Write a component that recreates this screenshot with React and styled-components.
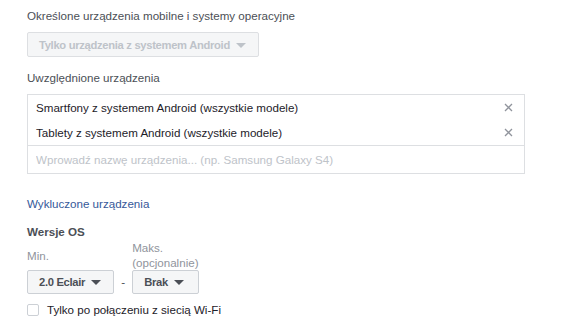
import React from 'react';
import styled, { createGlobalStyle } from 'styled-components';

const GlobalStyle = createGlobalStyle`
  body {
    margin: 0;
    background: #fff;
    font-family: "Liberation Sans", Arial, sans-serif;
    font-size: 11.6px;
    color: #1d2129;
  }
`;

const Page = styled.div`
  padding: 8px 0 0 27px;
  width: 497px;
`;

const Label = styled.div`
  line-height: 16px;
  color: #4b4f56;
  margin: ${p => p.$top || 0}px 0 8px;
`;

const Select = styled.button`
  display: inline-flex;
  align-items: center;
  gap: 6px;
  box-sizing: border-box;
  height: ${p => p.$h || 24}px;
  padding: 0 12px 0 11px;
  border: 1px solid ${p => (p.$disabled ? '#dddfe2' : '#ccd0d5')};
  border-radius: 2px;
  background: #f5f6f7;
  color: ${p => (p.$disabled ? '#bec3c9' : '#4b4f56')};
  font-family: inherit;
  font-size: 11.2px;
  font-weight: bold;
  letter-spacing: -0.3px;
  white-space: nowrap;
  cursor: ${p => (p.$disabled ? 'default' : 'pointer')};
`;

const Arrow = styled.span`
  width: 0;
  height: 0;
  border-left: 5px solid transparent;
  border-right: 5px solid transparent;
  border-top: 5px solid ${p => (p.$disabled ? '#bec3c9' : '#4b4f56')};
  margin-top: 1px;
`;

const TokenBox = styled.div`
  border: 1px solid #dddfe2;
  width: 496px;
`;

const Token = styled.div`
  display: flex;
  align-items: center;
  justify-content: space-between;
  height: 25px;
  padding: 0 11px 0 8px;
  color: #1d2129;
`;

const Remove = styled.span`
  display: flex;
  color: #90949c;
`;

const Input = styled.input`
  display: block;
  width: 100%;
  box-sizing: border-box;
  height: 28px;
  border: 0;
  border-top: 1px solid #dddfe2;
  padding: 0 8px;
  font-family: inherit;
  font-size: 11.6px;
  color: #1d2129;
  outline: none;
  &::placeholder { color: #bec3c9; }
`;

const Link = styled.a`
  display: block;
  margin-top: 22px;
  line-height: 16px;
  color: #365899;
  text-decoration: none;
`;

const SubTitle = styled.div`
  margin-top: 13px;
  line-height: 14px;
  font-weight: bold;
  color: #4b4f56;
`;

const VersionRow = styled.div`
  display: flex;
  align-items: flex-end;
  margin-top: 1px;
`;

const Column = styled.div`
  display: flex;
  flex-direction: column;
`;

const Hint = styled.div`
  display: flex;
  align-items: center;
  height: 30px;
  line-height: 15px;
  color: #90949c;
`;

const Dash = styled.span`
  width: 18px;
  height: 24px;
  line-height: 24px;
  text-align: center;
  color: #4b4f56;
`;

const CheckRow = styled.label`
  display: flex;
  align-items: center;
  gap: 8px;
  margin-top: 8px;
  line-height: 16px;
  color: #1d2129;
`;

const Box = styled.span`
  width: 12px;
  height: 12px;
  box-sizing: border-box;
  border: 1px solid #ccd0d5;
  border-radius: 2px;
  background: #fff;
`;

function Cross() {
  return (
    <svg width="9" height="9" viewBox="0 0 9 9">
      <path d="M1 1L8 8M8 1L1 8" stroke="currentColor" strokeWidth="1.3" />
    </svg>
  );
}

export default function App() {
  return (
    <Page>
      <GlobalStyle />
      <Label>Określone urządzenia mobilne i systemy operacyjne</Label>
      <Select $disabled $h={25}>
        Tylko urządzenia z systemem Android <Arrow $disabled />
      </Select>

      <Label $top={13}>Uwzględnione urządzenia</Label>
      <TokenBox>
        <Token>
          Smartfony z systemem Android (wszystkie modele)
          <Remove><Cross /></Remove>
        </Token>
        <Token>
          Tablety z systemem Android (wszystkie modele)
          <Remove><Cross /></Remove>
        </Token>
        <Input placeholder="Wprowadź nazwę urządzenia... (np. Samsung Galaxy S4)" />
      </TokenBox>

      <Link href="#">Wykluczone urządzenia</Link>

      <SubTitle>Wersje OS</SubTitle>
      <VersionRow>
        <Column>
          <Hint>Min.</Hint>
          <Select>2.0 Eclair <Arrow /></Select>
        </Column>
        <Dash>-</Dash>
        <Column>
          <Hint>Maks.<br />(opcjonalnie)</Hint>
          <Select>Brak <Arrow /></Select>
        </Column>
      </VersionRow>

      <CheckRow>
        <Box />
        Tylko po połączeniu z siecią Wi-Fi
      </CheckRow>
    </Page>
  );
}
